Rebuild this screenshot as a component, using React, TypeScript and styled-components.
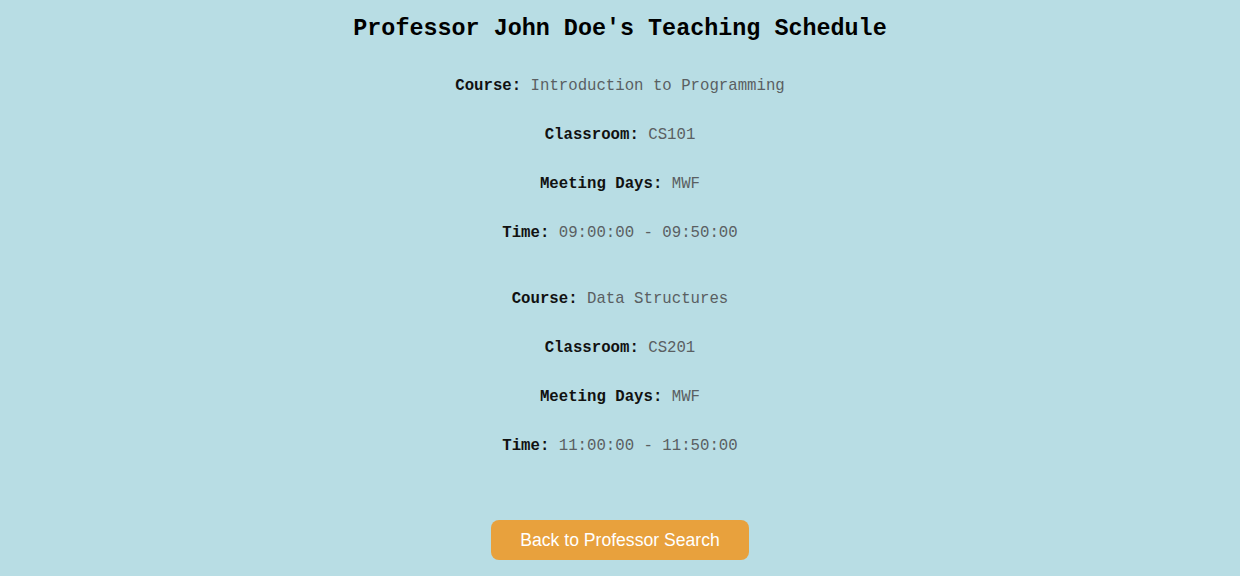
import React from "react";
import styled, { createGlobalStyle } from "styled-components";

const Global = createGlobalStyle`
  html, body { margin: 0; padding: 0; background: #b8dde4; }
  body { font-family: "Liberation Mono", "Courier New", monospace; }
`;

const Page = styled.main`
  display: flex;
  flex-direction: column;
  align-items: center;
  min-height: 576px;
  padding-top: 14px;
  box-sizing: border-box;
`;

const Title = styled.h2`
  margin: 0 0 17.5px;
  font-size: 23.4px;
  line-height: 30px;
  font-weight: bold;
  color: #000;
`;

const Schedule = styled.section`
  display: flex;
  flex-direction: column;
  align-items: center;
  gap: 17px;
`;

const Entry = styled.div`
  display: flex;
  flex-direction: column;
  align-items: center;
`;

const Field = styled.p`
  margin: 0;
  font-size: 15.7px;
  line-height: 49px;
  color: #000;
`;

const Label = styled.strong`
  font-weight: bold;
  color: #111;
`;

const Value = styled.span`
  color: #5a5f62;
`;

const BackButton = styled.button`
  margin-top: 49.5px;
  width: 258px;
  height: 40px;
  border: none;
  border-radius: 8px;
  background: #e8a13d;
  color: #fff;
  font-family: "Liberation Sans", Arial, sans-serif;
  font-size: 17.6px;
  cursor: pointer;
`;

const courses = [
  { course: "Introduction to Programming", room: "CS101", days: "MWF", time: "09:00:00 - 09:50:00" },
  { course: "Data Structures", room: "CS201", days: "MWF", time: "11:00:00 - 11:50:00" },
];

export default function App() {
  return (
    <>
      <Global />
      <Page>
        <Title>Professor John Doe's Teaching Schedule</Title>
        <Schedule>
          {courses.map((c) => (
            <Entry key={c.room}>
              <Field><Label>Course:</Label> <Value>{c.course}</Value></Field>
              <Field><Label>Classroom:</Label> <Value>{c.room}</Value></Field>
              <Field><Label>Meeting Days:</Label> <Value>{c.days}</Value></Field>
              <Field><Label>Time:</Label> <Value>{c.time}</Value></Field>
            </Entry>
          ))}
        </Schedule>
        <BackButton>Back to Professor Search</BackButton>
      </Page>
    </>
  );
}
